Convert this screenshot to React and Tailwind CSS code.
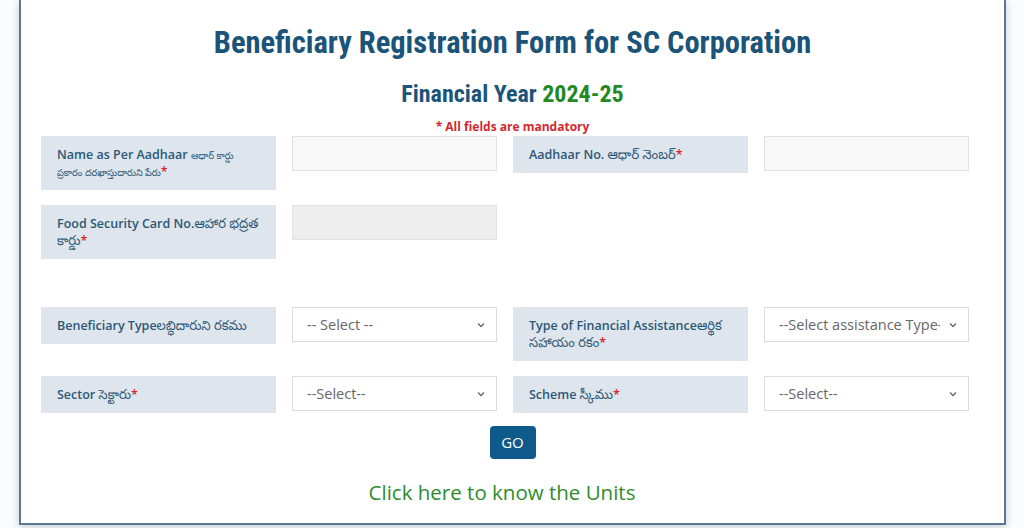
import React from 'react';

const LABEL = 'bg-[#dfe5ec] px-4 py-[10px] text-[12.5px] leading-[17px] font-semibold text-[#2b5877] self-start';
const TE = 'font-normal text-[13px] leading-none';
const STAR = <span className="text-[#d4282f] leading-none">*</span>;

function Select({ text }) {
  return (
    <div className="h-[35px] border border-[#dcdcdc] bg-white flex items-center pl-[14px] pr-[10px] text-[14.5px] text-[#666] self-start">
      <span className="flex-1 whitespace-nowrap overflow-hidden">{text}</span>
      <svg width="10" height="10" viewBox="0 0 10 10" className="shrink-0 ml-[8px]">
        <path d="M2 3.5 L5 6.5 L8 3.5" fill="none" stroke="#666" strokeWidth="1.3" />
      </svg>
    </div>
  );
}

export default function App() {
  return (
    <div className="w-[1024px] h-[528px] bg-[#fafcfd] overflow-hidden font-['Open_Sans','Noto_Sans','Noto_Sans_Telugu',sans-serif]">
      <div className="ml-[19px] w-[987px] h-[525px] bg-white border-x-2 border-b-2 border-[#5b7890] shadow-[0_2px_8px_rgba(90,120,150,0.35)] flex flex-col">
        {/* Heading */}
        <h1 className="mt-[25px] text-center text-[30.5px] leading-[36px] font-bold text-[#1b5478] font-['Roboto_Condensed','Liberation_Sans_Narrow',Roboto,sans-serif]">
          Beneficiary Registration Form for SC Corporation
        </h1>
        <h2 className="mt-[19px] text-center text-[24px] leading-[28px] font-bold text-[#1b5478] font-['Roboto_Condensed','Liberation_Sans_Narrow',Roboto,sans-serif]">
          Financial Year <span className="text-[#23891f]">2024-25</span>
        </h2>
        <p className="mt-[12px] text-center text-[12px] leading-[14px] font-bold text-[#d4282f]">
          * All fields are mandatory
        </p>

        {/* Form */}
        <div className="mt-[2px] pl-[20px] grid grid-cols-[235px_205px_235px_205px] gap-x-[16px] gap-y-[15px]">
          <div className={LABEL}>
            Name as Per Aadhaar <span className="font-normal text-[9.5px] leading-none">ఆధార్ కార్డు<br />ప్రకారం దరఖాస్తుదారుని పేరు</span>{STAR}
          </div>
          <div className="h-[35px] border border-[#e2e2e2] bg-[#f8f8f8] self-start" />
          <div className={LABEL}>
            Aadhaar No. <span className={TE}>ఆధార్ నెంబర్</span>{STAR}
          </div>
          <div className="h-[35px] border border-[#e2e2e2] bg-[#f8f8f8] self-start" />

          <div className={LABEL}>
            Food Security Card No.<span className={TE}>ఆహార భద్రత కార్డు</span>{STAR}
          </div>
          <div className="h-[35px] border border-[#e2e2e2] bg-[#eeeeee] self-start" />
          <div />
          <div />

          <div className="col-span-4 h-[18px]" />

          <div className={LABEL}>
            Beneficiary Type<span className={TE}>లబ్ధిదారుని రకము</span>
          </div>
          <Select text="-- Select --" />
          <div className={LABEL}>
            Type of Financial Assistance<span className={TE}>ఆర్థిక సహాయం రకం</span>{STAR}
          </div>
          <Select text="--Select assistance Type--" />

          <div className={LABEL}>
            Sector <span className={TE}>సెక్టారు</span>{STAR}
          </div>
          <Select text="--Select--" />
          <div className={LABEL}>
            Scheme <span className={TE}>స్కీము</span>{STAR}
          </div>
          <Select text="--Select--" />
        </div>

        <div className="mt-[13px] flex justify-center">
          <button className="w-[46px] h-[33px] rounded bg-[#0e5a8a] text-white text-[15px]">GO</button>
        </div>
        <p className="mt-[19px] pl-[20px] pr-[41px] text-center text-[20.5px] leading-[28px] text-[#2e8b2a]">Click here to know the Units</p>
      </div>
    </div>
  );
}
